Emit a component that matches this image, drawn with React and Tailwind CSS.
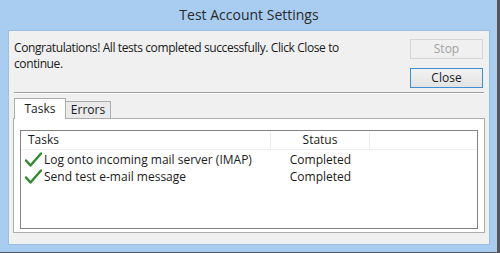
import React from "react";

function Check() {
  return (
    <svg width="17" height="15" viewBox="0 0 17 15" className="shrink-0">
      <path d="M1 8.5 L5.5 13.5 L16 1.5" fill="none" stroke="#2f8a2f" strokeWidth="2.4" strokeLinecap="round" strokeLinejoin="round" />
    </svg>
  );
}

export default function App() {
  const font = { fontFamily: '"Open Sans", "Noto Sans", sans-serif' };
  return (
    <div className="w-[500px] h-[253px] bg-[#5a5559] flex overflow-hidden" style={font}>
      <div className="w-[497px] h-[252px] bg-[#a9cdf0] flex flex-col px-[8px] pb-[7px] pr-[7px]">
        <div className="h-[30px] flex items-center justify-center text-[14px] text-[#2a2a2a] pb-[2px]">
          Test Account Settings
        </div>
        <div className="flex-1 bg-[#f0f0f0] border border-[#9bbfe0] flex flex-col text-[12px] text-[#1a1a1a]">
          <div className="flex justify-between pl-[5px] pr-[6px] pt-[7px] h-[58px]">
            <div className="pt-[2px] leading-[16px] tracking-[-0.4px]">
              Congratulations! All tests completed successfully. Click Close to
              <br />
              continue.
            </div>
            <div className="flex flex-col gap-[9px] pt-[1px]">
              <div className="w-[73px] h-[20px] border border-[#d6d6d6] bg-[#f0f0f0] text-[#a0a0a0] flex items-center justify-center">
                Stop
              </div>
              <div className="w-[73px] h-[20px] border border-[#3c8fd8] bg-[#e8e8e8] bg-gradient-to-b from-[#f2f2f2] to-[#e3e3e3] flex items-center justify-center">
                Close
              </div>
            </div>
          </div>
          <div className="mx-[5px] mt-[3px] h-[2px] border-t border-[#a0a0a0] border-b-white border-b" />
          <div className="mx-[4px] mt-[3px] flex flex-col">
            <div className="flex items-end h-[21px] pl-[1px]">
              <div className="h-[21px] w-[52px] bg-white border border-[#adadad] border-b-0 flex items-center justify-center -mb-px relative z-10">
                Tasks
              </div>
              <div className="h-[17px] w-[45px] bg-[#eaeaea] border border-[#adadad] border-l-0 border-b-0 flex items-center justify-center">
                Errors
              </div>
            </div>
            <div className="h-[115px] bg-white border border-[#adadad] px-[6px] pt-[11px]">
              <div className="h-[99px] border border-[#828282] flex flex-col">
                <div className="h-[19px] flex border-b border-[#f0f0f0]">
                  <div className="w-[250px] pl-[7px] flex items-center border-r border-[#ececec]">Tasks</div>
                  <div className="w-[99px] flex items-center justify-center border-r border-[#ececec]">Status</div>
                </div>
                <div className="flex flex-col pt-[1px]">
                  {["Log onto incoming mail server (IMAP)", "Send test e-mail message"].map((t) => (
                    <div key={t} className="h-[17px] flex items-center">
                      <div className="w-[250px] pl-[4px] flex items-center gap-[2px]">
                        <Check />
                        <span>{t}</span>
                      </div>
                      <div className="w-[99px] flex items-center justify-center">Completed</div>
                    </div>
                  ))}
                </div>
              </div>
            </div>
          </div>
        </div>
      </div>
    </div>
  );
}
